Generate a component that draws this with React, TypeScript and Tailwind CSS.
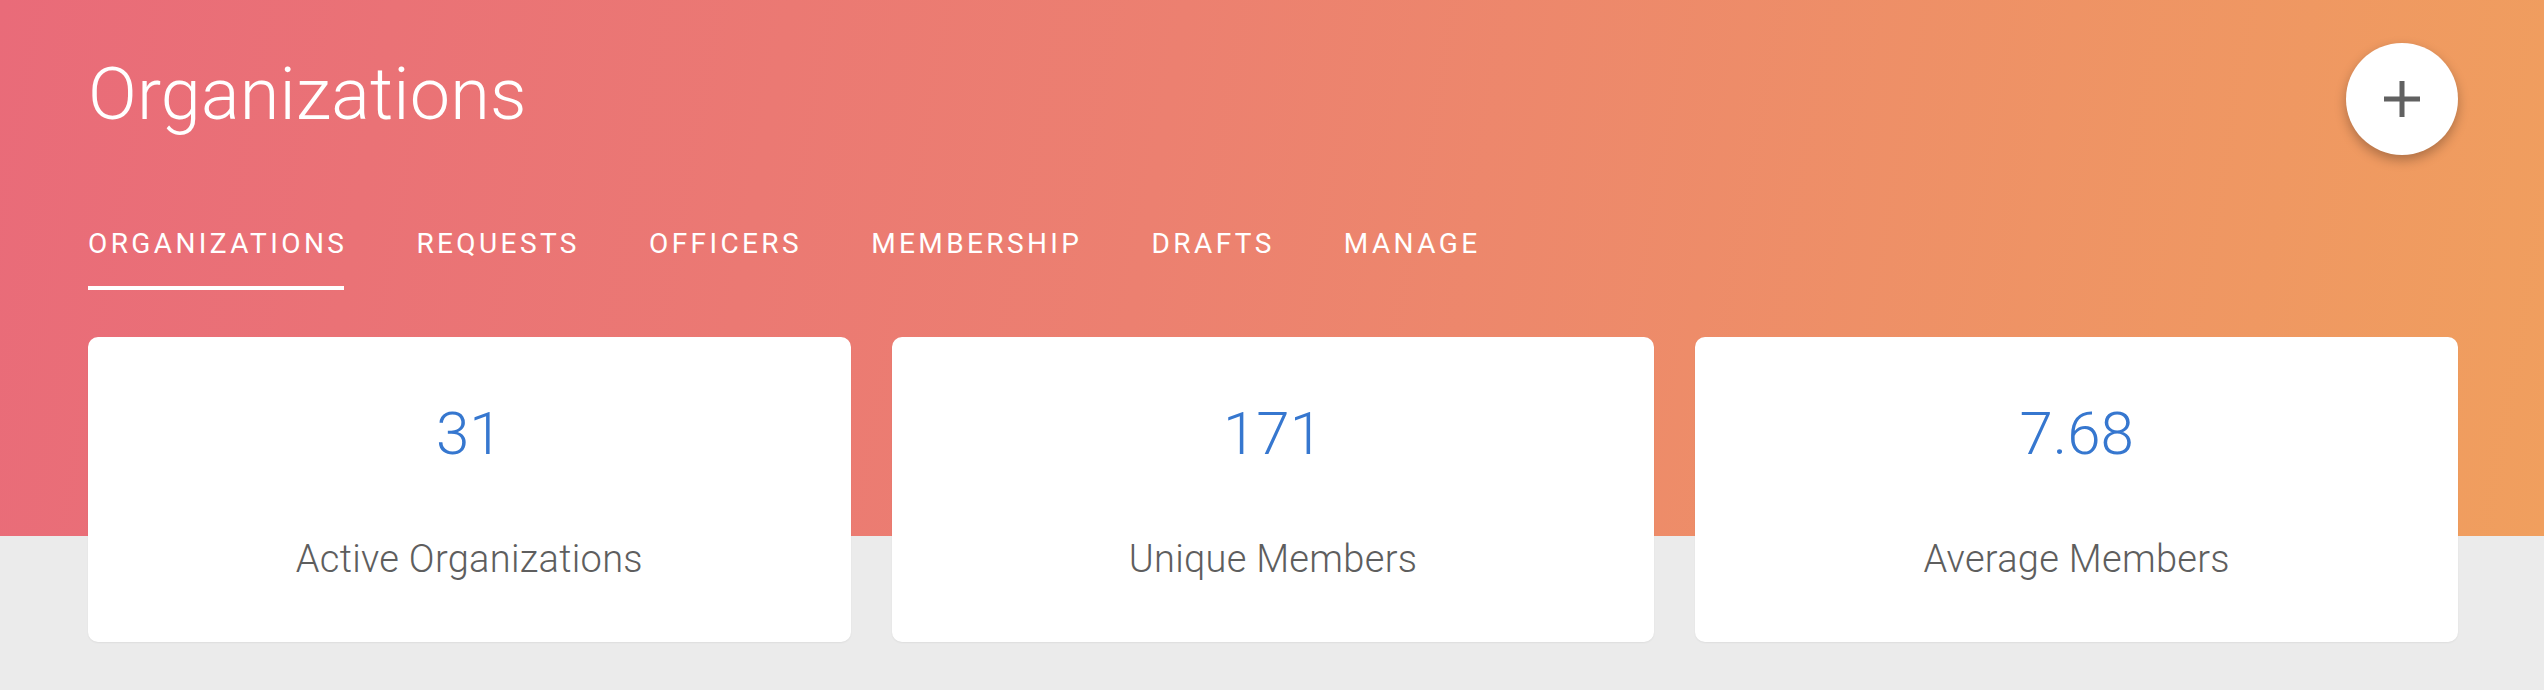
import React from "react";

const tabs = ["Organizations", "Requests", "Officers", "Membership", "Drafts", "Manage"];

const stats = [
  { value: "31", label: "Active Organizations" },
  { value: "171", label: "Unique Members" },
  { value: "7.68", label: "Average Members" },
];

export default function App() {
  return (
    <div
      className="min-h-[690px] w-full bg-[#ebebeb] overflow-hidden"
      style={{ fontFamily: "Roboto, 'Noto Sans', sans-serif" }}
    >
      <header className="h-[536px] bg-[linear-gradient(100deg,#e96b79_0%,#ec8070_45%,#f09f5e_100%)] pl-[88px] pr-[86px] pt-[43px]">
        <div className="flex items-start justify-between">
          <h1 className="mt-[16px] text-[72px] leading-[72px] font-light text-white tracking-[0.2px]">
            Organizations
          </h1>
          <button className="flex h-[112px] w-[112px] items-center justify-center rounded-full bg-white shadow-[0_5px_12px_rgba(0,0,0,0.28)]">
            <svg width="36" height="36" viewBox="0 0 36 36">
              <rect x="0" y="15.5" width="36" height="5" fill="#616161" />
              <rect x="15.5" y="0" width="5" height="36" fill="#616161" />
            </svg>
          </button>
        </div>
        <nav className="mt-[75px] flex gap-[72.5px]">
          {tabs.map((t, i) => (
            <div
              key={t}
              className={
                "pb-[28px] border-b-4 text-[28px] leading-[28px] uppercase text-white font-normal " +
                (i === 0 ? "border-white" : "border-transparent")
              }
            >
              <span className="tracking-[3.4px] -mr-[3.4px]">{t}</span>
            </div>
          ))}
        </nav>
      </header>
      <section className="-mt-[199px] grid grid-cols-3 gap-[41px] pl-[88px] pr-[86px]">
        {stats.map((s) => (
          <div
            key={s.label}
            className="flex h-[305px] flex-col items-center rounded-[10px] bg-white pt-[67px] shadow-[0_1px_2px_rgba(0,0,0,0.06)]"
          >
            <div className="text-[60px] leading-[60px] font-light text-[#3677cf]">{s.value}</div>
            <div className="mt-[76px] text-[38px] leading-[38px] font-light text-[#5e5e5e] tracking-[0.3px]">
              {s.label}
            </div>
          </div>
        ))}
      </section>
    </div>
  );
}
